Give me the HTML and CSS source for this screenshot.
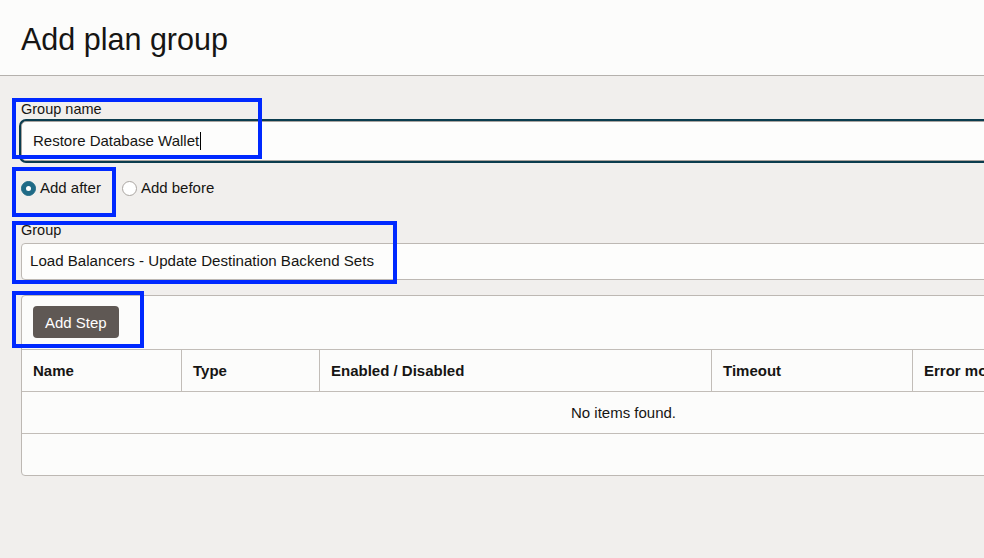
FILE: index.html
```html
<!DOCTYPE html>
<html lang="en">
<head>
<meta charset="utf-8">
<title>Add plan group</title>
<link rel="stylesheet" href="styles.css">
</head>
<body>
<header class="page-header">
  <h1 class="page-title">Add plan group</h1>
</header>
<main class="content">
  <div class="field field-name">
    <label class="field-label">Group name</label>
    <div class="text-input is-focused"><span class="input-value">Restore Database Wallet</span><span class="caret"></span></div>
  </div>
  <div class="radio-group">
    <label class="radio-option"><span class="radio is-checked"></span><span>Add after</span></label>
    <label class="radio-option"><span class="radio"></span><span>Add before</span></label>
  </div>
  <div class="field field-group">
    <label class="field-label">Group</label>
    <div class="select-input">Load Balancers - Update Destination Backend Sets</div>
  </div>
  <section class="table-card">
    <div class="toolbar"><button class="btn">Add Step</button></div>
    <table class="steps">
      <colgroup>
        <col class="c-name"><col class="c-type"><col class="c-enabled"><col class="c-timeout"><col class="c-error">
      </colgroup>
      <thead>
        <tr><th>Name</th><th>Type</th><th>Enabled / Disabled</th><th>Timeout</th><th>Error mode</th></tr>
      </thead>
      <tbody>
        <tr><td class="empty" colspan="5">No items found.</td></tr>
      </tbody>
    </table>
    <div class="table-footer"></div>
  </section>
</main>
<div class="annot annot-name"></div>
<div class="annot annot-radio"></div>
<div class="annot annot-group"></div>
<div class="annot annot-step"></div>
</body>
</html>
```

FILE: styles.css
```css
html, body {
  margin: 0;
  padding: 0;
  overflow: hidden;
}
body {
  width: 984px;
  height: 558px;
  position: relative;
  background: #f1efed;
  color: #161513;
  font-family: "Liberation Sans", Arial, sans-serif;
  font-size: 15px;
}
.page-header {
  background: #fcfcfb;
  border-bottom: 1px solid #b5b1ad;
  height: 75px;
  box-sizing: content-box;
  padding: 0 0 0 21px;
}
.page-title {
  margin: 0;
  padding-top: 21px;
  font-size: 30.5px;
  line-height: 36px;
  font-weight: normal;
}
.content {
  padding: 25px 0 0 21px;
  width: 1205px;
}
.field-label {
  display: block;
  font-size: 14.5px;
  line-height: 17px;
}
.field-name .field-label { margin-bottom: 3px; }
.text-input {
  height: 40px;
  box-sizing: border-box;
  border: 1px solid #a9a4a0;
  border-radius: 5px;
  background: #fdfdfc;
  padding-left: 11px;
  line-height: 38px;
  display: flex;
  align-items: center;
}
.text-input.is-focused {
  box-shadow: 0 0 0 2px #0b3c4e;
}
.caret {
  display: inline-block;
  width: 1px;
  height: 18px;
  background: #000;
  margin-left: 1px;
}
.radio-group {
  display: flex;
  gap: 21px;
  margin-top: 17px;
  line-height: 20px;
}
.radio-option {
  display: flex;
  align-items: center;
  gap: 4px;
}
.radio {
  width: 15px;
  height: 15px;
  box-sizing: border-box;
  border-radius: 50%;
  border: 1px solid #aaa5a1;
  background: #fff;
  display: flex;
  align-items: center;
  justify-content: center;
}
.radio.is-checked {
  border-color: #1f6a86;
  background: #1f6a86;
}
.radio.is-checked::after {
  content: "";
  width: 5px;
  height: 5px;
  border-radius: 50%;
  background: #fff;
}
.field-group { margin-top: 24px; }
.field-group .field-label { margin-bottom: 4px; }
.select-input {
  height: 37px;
  box-sizing: border-box;
  border: 1px solid #bdb8b3;
  border-radius: 4px;
  background: #fdfdfc;
  padding: 0 0 2px 8px;
  line-height: 33px;
  font-size: 15.1px;
}
.table-card {
  margin-top: 15px;
  border: 1px solid #bdb8b3;
  border-radius: 4px;
  background: #fcfcfb;
}
.toolbar {
  padding: 10px 0 11px 11px;
  display: flex;
}
.btn {
  font-family: inherit;
  font-size: 15px;
  color: #fff;
  background: #5f5854;
  border: none;
  border-radius: 4px;
  height: 32px;
  padding: 0 12px;
}
.steps {
  width: 1203px;
  table-layout: fixed;
  border-collapse: separate;
  border-spacing: 0;
}
.c-name { width: 159px; }
.c-type { width: 138px; }
.c-enabled { width: 392px; }
.c-timeout { width: 201px; }
.c-error { width: 313px; }
.steps th {
  text-align: left;
  font-weight: bold;
  line-height: 41px;
  padding: 0 11px;
  border-top: 1px solid #c2bdb8;
  border-bottom: 1px solid #c2bdb8;
  border-left: 1px solid #c2bdb8;
  white-space: nowrap;
  overflow: hidden;
}
.steps th:first-child { border-left: none; }
.steps td {
  padding: 0;
  line-height: 41px;
  border-bottom: 1px solid #c2bdb8;
}
.steps .empty { text-align: center; }
.table-footer { height: 41px; }
.annot {
  position: absolute;
  border: 4px solid #0029ff;
  box-sizing: border-box;
}
.annot-name { left: 12px; top: 98px; width: 250px; height: 61px; }
.annot-radio { left: 12px; top: 167px; width: 104px; height: 50px; }
.annot-group { left: 12px; top: 221px; width: 385px; height: 63px; }
.annot-step { left: 12px; top: 291px; width: 132px; height: 57px; }
```
